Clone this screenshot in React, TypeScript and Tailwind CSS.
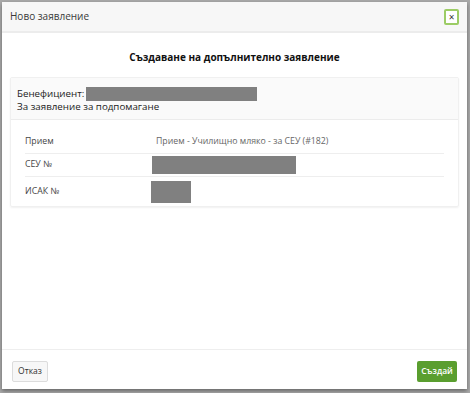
export default function App() {
  return (
    <div className="h-[393px] w-[470px] overflow-hidden bg-[#a9a9a9] font-['Open_Sans',sans-serif]">
      <div className="ml-[2px] mt-[2px] flex h-[387px] w-[465px] flex-col bg-white shadow-[0_2px_4px_rgba(0,0,0,0.4)]">
        <div className="flex h-[31px] items-center justify-between border-b-2 border-[#ececec] bg-[#f7f7f7] pl-[8px] pr-[8px]">
          <span className="text-[10px] text-[#3a3a3a]">Ново заявление</span>
          <button className="flex h-[16px] w-[15px] items-center justify-center rounded-[2px] border-2 border-[#9ccc65] bg-white text-[10px] leading-none text-[#333]">
            ×
          </button>
        </div>

        <div className="flex-1 px-[8px]">
          <h2 className="mt-[17px] text-center text-[10px] font-bold text-[#111]">
            Създаване на допълнително заявление
          </h2>

          <div className="mt-[12px] rounded-[2px] border border-[#f0f0f0] shadow-[0_1px_2px_rgba(0,0,0,0.06)]">
            <div className="border-b border-[#ececec] bg-[#fafafa] pb-[6px] pl-[6px] pr-[10px] pt-[9px] text-[9.75px] leading-[12px] text-[#222]">
              <div className="flex items-center">
                <span>Бенефициент:</span>
                <span className="ml-[2px] inline-block h-[14px] w-[171px] bg-[#808080]" />
              </div>
              <div>За заявление за подпомагане</div>
            </div>

            <div className="px-[14px] pt-[11px] text-[8.75px] text-[#444]">
              <div className="flex h-[23px] items-center border-b border-[#eeeeee]">
                <span className="w-[127px]">Прием</span>
                <span className="pl-[4px] text-[#666]">Прием - Училищно мляко - за СЕУ (#182)</span>
              </div>
              <div className="flex h-[23px] items-center border-b border-[#eeeeee]">
                <span className="w-[127px]">СЕУ №</span>
                <span className="inline-block h-[18px] w-[144px] bg-[#808080]" />
              </div>
              <div className="flex h-[29px] items-center">
                <span className="w-[126px]">ИСАК №</span>
                <span className="inline-block h-[22px] w-[40px] bg-[#808080]" />
              </div>
            </div>
          </div>
        </div>

        <div className="flex h-[40px] items-center justify-between border-t border-[#eeeeee] px-[10px] pt-[3px]">
          <button className="h-[21px] w-[36px] rounded-[2px] border border-[#dcdcdc] bg-[#f7f7f7] text-[8.5px] text-[#333]">
            Отказ
          </button>
          <button className="h-[21px] w-[40px] rounded-[2px] bg-[#5a9e2f] text-[8.5px] font-semibold text-white">
            Създай
          </button>
        </div>
      </div>
    </div>
  );
}
